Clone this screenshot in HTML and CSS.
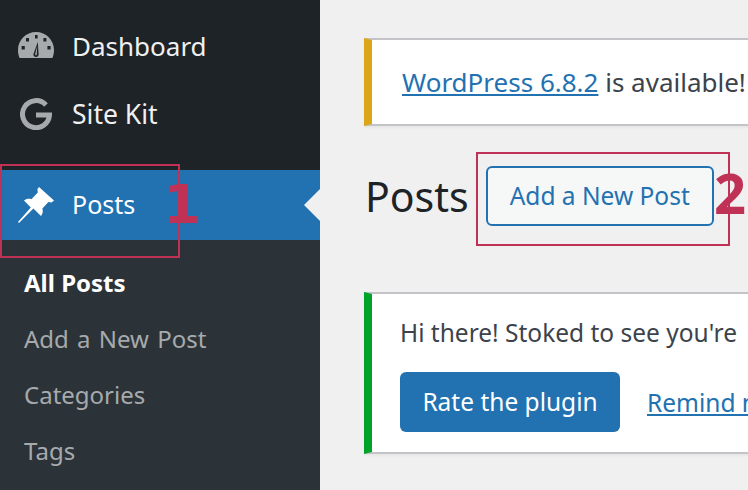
FILE: index.html
```html
<!DOCTYPE html>
<html lang="en">
<head>
    <meta charset="UTF-8">
    <title>Posts</title>
    <link rel="stylesheet" href="styles.css">
</head>
<body>
    <aside class="sidebar">
        <ul class="menu">
            <li class="menu-item">
                <svg class="menu-icon gauge-icon" viewBox="0 0 36 26" width="36" height="26">
                    <path fill="#a7aaad" fill-rule="evenodd" d="M18 0C8 0 0 8 0 18c0 3 .6 5.600 1.600 8h32.800c1-2.400 1.600-5 1.600-8C36 8 28 0 18 0zM17 3h2.600v3.600H17zM8 6h3v3.400H8zM25.400 6h3v3.400h-3zM3.600 14h3.200v3.600H3.600zM29.400 14h3.200v3.600h-3.200zM19.800 10l.8 12c.2 1.800-1 3-2.600 3s-2.800-1.200-2.600-2.800z"/>
                    <path fill="#a7aaad" d="M19.200 14l-.4 8c0 .8-.4 1.400-1 1.200-.6 0-.8-.6-.6-1.200z"/>
                </svg>
                <span>Dashboard</span>
            </li>
            <li class="menu-item">
                <svg class="menu-icon g-icon" viewBox="0 0 32 32" width="32" height="32">
                    <path fill="none" stroke="#a7aaad" stroke-width="5" d="M26 7A13.500 13.500 0 1 0 29.500 17H16"/>
                </svg>
                <span class="kit-label">Site Kit</span>
            </li>
        </ul>
        <div class="menu-item current">
            <svg class="menu-icon" viewBox="0 0 36 36" width="36" height="36">
                <path fill="#fff" d="M21 0l15 13.500-2.400 2-3.200-.6-6 6.600c.8 3 .4 5.400-1.400 7.500l-7.600-7.500L1 36l-1-1 12.800-14.400-6.800-7c2-1.800 4.600-2.400 7.400-1.400l6.400-6.800-.4-3.200z"/>
            </svg>
            <span class="current-label">Posts</span>
        </div>
        <ul class="submenu">
            <li class="active">All Posts</li>
            <li>Add a New Post</li>
            <li>Categories</li>
            <li>Tags</li>
        </ul>
    </aside>

    <main class="content">
        <div class="notice notice-warning">
            <a href="#">WordPress 6.8.2</a> is available!
        </div>
        <div class="title-row">
            <h1>Posts</h1>
            <a class="add-button" href="#">Add a New Post</a>
        </div>
        <div class="notice notice-success">
            <p>Hi there! Stoked to see you're</p>
            <div class="notice-actions">
                <a class="rate-button" href="#">Rate the plugin</a>
                <a href="#">Remind me later</a>
            </div>
        </div>
    </main>

    <div class="mark mark-one"></div>
    <div class="mark mark-two"></div>
    <span class="step step-one">1</span>
    <span class="step step-two">2</span>
</body>
</html>
```

FILE: styles.css
```css
html, body {
    height: 100%;
}
body {
    margin: 0;
    display: flex;
    overflow: hidden;
    background: #f0f0f1;
    color: #3c434a;
    font-family: "Noto Sans", "Open Sans", sans-serif;
    font-size: 24.500px;
}
a {
    color: #2271b1;
}
ul {
    list-style: none;
    margin: 0;
    padding: 0;
}

.sidebar {
    width: 320px;
    flex-shrink: 0;
    display: flex;
    flex-direction: column;
    background: #1d2327;
    color: #f0f0f1;
}
.menu {
    padding: 12px 0 22px;
}
.menu-item {
    height: 68px;
    display: flex;
    align-items: center;
    gap: 18px;
    padding-left: 18px;
    font-size: 26px;
}
.menu-icon {
    flex-shrink: 0;
}
.gauge-icon {
    margin-top: -2px;
}
.g-icon {
    margin: 0 2px;
}
.kit-label {
    font-size: 26.500px;
}
.current {
    position: relative;
    height: 70px;
    background: #2271b1;
    color: #fff;
    font-size: 25px;
}
.current-label {
    margin-top: -2px;
}
.current::after {
    content: "";
    position: absolute;
    right: 0;
    top: 19px;
    border: 16px solid transparent;
    border-right-color: #f0f0f1;
    border-left: 0;
}
.submenu {
    flex: 1;
    padding-top: 15px;
    background: #2c3338;
    color: #a7aaad;
    font-size: 24px;
    word-spacing: 2px;
}
.submenu li {
    height: 56px;
    line-height: 56px;
    padding-left: 24px;
}
.submenu .active {
    color: #fff;
    font-weight: 700;
    word-spacing: 0;
}

.content {
    flex: 1;
    min-width: 0;
    padding: 38px 0 0 44px;
    overflow: hidden;
    white-space: nowrap;
}
.notice {
    background: #fff;
    border: 2px solid #c3c4c7;
    border-left-width: 8px;
    border-right: 0;
    box-shadow: 0 2px 2px rgba(0, 0, 0, .04);
    padding-left: 30px;
}
.notice-warning {
    height: 84px;
    line-height: 84px;
    border-left-color: #dba617;
    font-size: 26px;
}
.notice-success {
    height: 158px;
    margin-top: 66px;
    padding-left: 28px;
    border-left-color: #00a32a;
}
.notice p {
    margin: 0;
    padding-top: 22px;
    line-height: 34px;
}
.notice-actions {
    display: flex;
    align-items: center;
    gap: 27px;
    margin-top: 22px;
}

.title-row {
    display: flex;
    align-items: center;
    height: 60px;
    margin-top: 40px;
}
h1 {
    margin: 0 0 0 1px;
    color: #1d2327;
    font-size: 41px;
    font-weight: 400;
}
.add-button {
    box-sizing: border-box;
    width: 228px;
    height: 60px;
    margin-left: 17px;
    line-height: 56px;
    text-align: center;
    text-decoration: none;
    background: #f6f7f7;
    border: 2px solid #2271b1;
    border-radius: 6px;
}
.rate-button {
    flex-shrink: 0;
    width: 220px;
    height: 60px;
    line-height: 60px;
    text-align: center;
    text-decoration: none;
    color: #fff;
    background: #2271b1;
    border-radius: 6px;
}

/* red annotations drawn over the screenshot */
.mark {
    position: absolute;
    box-sizing: border-box;
    height: 94px;
    border: 2px solid #bf3256;
}
.mark-one {
    left: 0;
    top: 164px;
    width: 180px;
}
.mark-two {
    left: 476px;
    top: 152px;
    width: 254px;
}
.step {
    position: absolute;
    color: #bf3256;
    font-size: 56px;
    font-weight: 700;
    line-height: 56px;
}
.step-one {
    left: 163px;
    top: 177px;
    font-family: "DejaVu Sans", sans-serif;
    font-size: 54px;
}
.step-two {
    left: 714px;
    top: 164px;
}
```
